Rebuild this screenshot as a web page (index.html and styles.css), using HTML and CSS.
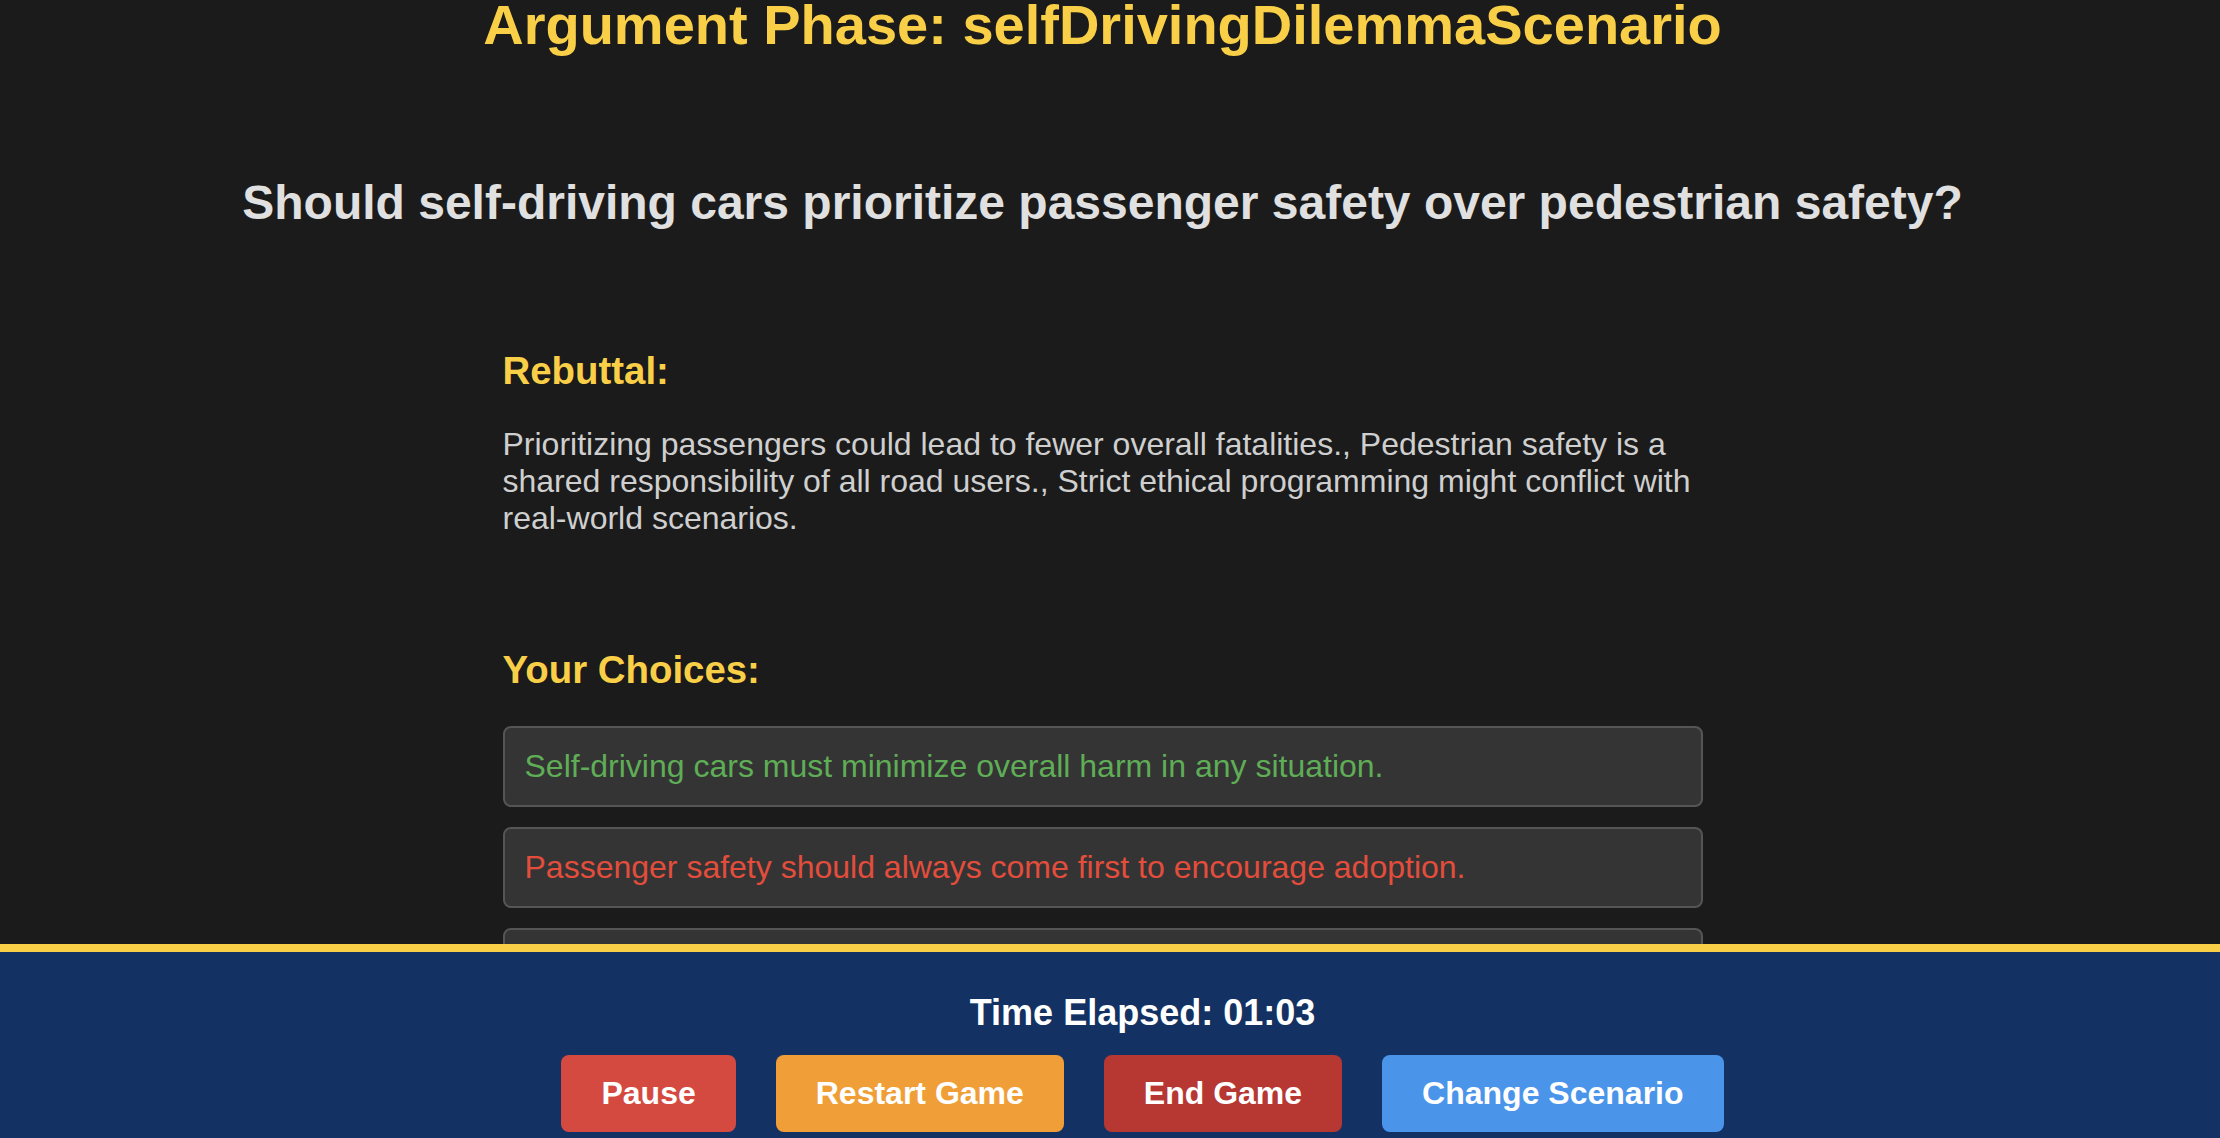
FILE: index.html
```html
<!DOCTYPE html>
<html lang="en">
<head>
<meta charset="utf-8">
<title>Argument Phase</title>
<link rel="stylesheet" href="styles.css">
</head>
<body>
<main class="page">
  <h1 class="phase-title">Argument Phase: selfDrivingDilemmaScenario</h1>
  <h2 class="question">Should self-driving cars prioritize passenger safety over pedestrian safety?</h2>
  <div class="content">
    <section class="rebuttal">
      <h3 class="section-title">Rebuttal:</h3>
      <p class="rebuttal-text">Prioritizing passengers could lead to fewer overall fatalities., Pedestrian safety is a shared responsibility of all road users., Strict ethical programming might conflict with real-world scenarios.</p>
    </section>
    <section class="choices">
      <h3 class="section-title">Your Choices:</h3>
      <div class="choice-list">
        <button class="choice choice-good">Self-driving cars must minimize overall harm in any situation.</button>
        <button class="choice choice-bad">Passenger safety should always come first to encourage adoption.</button>
        <button class="choice choice-neutral">Pedestrians deserve equal protection under any algorithm.</button>
      </div>
    </section>
  </div>
</main>
<footer class="game-footer">
  <div class="timer">Time Elapsed: 01:03</div>
  <div class="controls">
    <button class="ctrl ctrl-pause">Pause</button>
    <button class="ctrl ctrl-restart">Restart Game</button>
    <button class="ctrl ctrl-end">End Game</button>
    <button class="ctrl ctrl-change">Change Scenario</button>
  </div>
</footer>
</body>
</html>
```
FILE: styles.css
```css
html, body {
  margin: 0;
  padding: 0;
  height: 100%;
  overflow: hidden;
}

body {
  background: #1b1b1b;
  color: #dddddd;
  font-family: "Liberation Sans", Arial, Helvetica, sans-serif;
}

.page {
  width: calc(100% - 15px);
  text-align: center;
}

.phase-title {
  margin: -8px 0 0;
  font-size: 56px;
  font-weight: bold;
  color: #f9cf48;
}

.question {
  margin: 118px 0 0;
  font-size: 48px;
  font-weight: bold;
  color: #e0e0e0;
}

.content {
  width: 1200px;
  margin: 0 auto;
  text-align: left;
}

.rebuttal {
  margin-top: 119px;
}

.section-title {
  margin: 0;
  font-size: 38.4px;
  font-weight: bold;
  color: #f9cf48;
}

.rebuttal-text {
  margin: 33px 0 0;
  font-size: 32px;
  color: #cfcfcf;
}

.choices {
  margin-top: 111px;
}

.choice-list {
  margin-top: 34px;
  display: flex;
  flex-direction: column;
  gap: 20px;
}

.choice {
  display: block;
  width: 100%;
  box-sizing: border-box;
  text-align: left;
  padding: 20px;
  background: #343434;
  border: 2px solid #555555;
  border-radius: 8px;
  font-family: inherit;
  font-size: 32px;
  line-height: normal;
}

.choice-good {
  color: #5fad56;
}

.choice-bad {
  color: #e34d3c;
}

.choice-neutral {
  color: #dddddd;
}

.game-footer {
  position: fixed;
  left: 0;
  right: 0;
  bottom: 0;
  background: #133263;
  border-top: 8px solid #f9cf48;
  padding: 40px 0 6px 65px;
  text-align: center;
}

.timer {
  font-size: 36px;
  font-weight: bold;
  color: #ffffff;
}

.controls {
  margin-top: 21px;
  display: flex;
  justify-content: center;
  gap: 40px;
}

.ctrl {
  border: none;
  border-radius: 8px;
  padding: 20px 40px;
  font-family: inherit;
  font-size: 32px;
  font-weight: bold;
  line-height: normal;
  color: #ffffff;
}

.ctrl-pause {
  background: #d44a41;
}

.ctrl-restart {
  background: #f09f38;
}

.ctrl-end {
  background: #b73732;
}

.ctrl-change {
  background: #4a94ea;
}
```
